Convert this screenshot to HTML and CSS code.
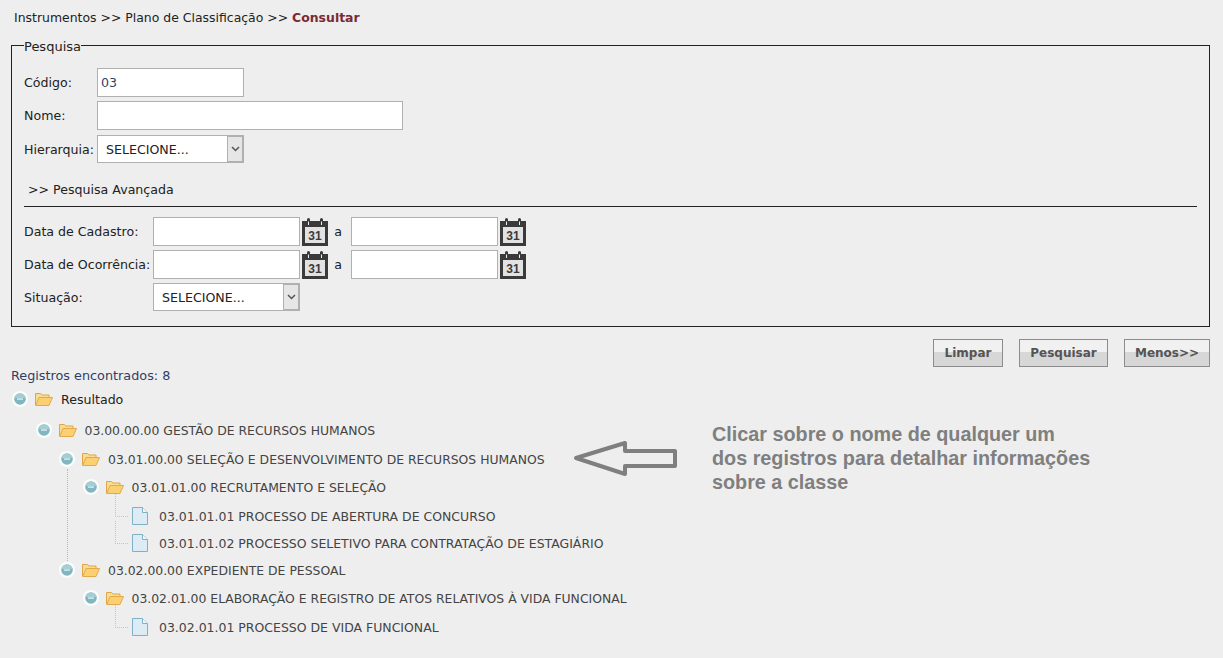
FILE: index.html
```html
<!DOCTYPE html>
<html lang="pt-BR">
<head>
    <meta charset="UTF-8">
    <title>Plano de Classificação - Consultar</title>
    <link rel="stylesheet" href="styles.css">
</head>
<body>
    <!-- icon definitions -->
    <svg class="icon-defs" width="0" height="0">
        <defs>
            <symbol id="cal" viewBox="0 0 26 28">
                <path fill="#3a3a3a" d="M0 3h5V1.5a1.5 1.5 0 0 1 3 0V3h10V1.500a1.500 1.500 0 0 1 3 0V3h5v25H0z"/>
                <rect x="3" y="9" width="20" height="16" fill="#e2e2e2"/>
                <rect x="6" y="3.500" width="1" height="3.500" fill="#eee"/>
                <rect x="19" y="3.500" width="1" height="3.500" fill="#eee"/>
                <text x="13" y="22" text-anchor="middle" class="cal-num">31</text>
            </symbol>
            <symbol id="toggle" viewBox="0 0 16 16">
                <circle cx="8" cy="8" r="8" fill="#fbfdfd"/>
                <circle cx="8" cy="8" r="5.800" fill="#7fb6c1"/>
                <path d="M2.400 7a5.800 5.800 0 0 1 11.200 0z" fill="#a5cdd4"/>
                <rect x="5" y="7.300" width="6" height="1.500" fill="#dbe9ec"/>
            </symbol>
            <symbol id="folder" viewBox="0 0 18 14">
                <path d="M.5 13V1.500h5l1.500 1.500h7v3" fill="#f9dc94" stroke="#dfa54a"/>
                <path d="M.7 13.500 4 5.500h13.500l-3.500 8z" fill="#fbd070" stroke="#e3a94e"/>
            </symbol>
            <symbol id="leaf" viewBox="0 0 16 18">
                <path d="M.5.500h10l5 5v12H.5z" fill="#dcebf4" stroke="#7fb0c6"/>
                <path d="M10.500.500v5h5" fill="#f4f9fc" stroke="#7fb0c6"/>
            </symbol>
            <symbol id="chev" viewBox="0 0 9 6">
                <path d="M1 1l3.500 3.500L8 1" fill="none" stroke="#555" stroke-width="1.500"/>
            </symbol>
        </defs>
    </svg>

    <div class="breadcrumb">
        Instrumentos &gt;&gt; Plano de Classificação &gt;&gt; <strong>Consultar</strong>
    </div>

    <fieldset class="search-box">
        <legend>Pesquisa</legend>

        <div class="form-row first">
            <label class="lbl">Código:</label>
            <input class="txt" type="text" value="03">
        </div>
        <div class="form-row">
            <label class="lbl">Nome:</label>
            <input class="txt txt-wide" type="text">
        </div>
        <div class="form-row hier-row">
            <label class="lbl">Hierarquia:</label>
            <div class="select-box">
                <select><option>SELECIONE...</option></select>
                <span class="select-arrow"><svg width="9" height="6"><use href="#chev"/></svg></span>
            </div>
        </div>

        <div class="advanced">&gt;&gt; Pesquisa Avançada</div>

        <div class="form-row date-row">
            <label class="lbl lbl-long">Data de Cadastro:</label>
            <input class="txt" type="text">
            <svg class="cal" width="26" height="28"><use href="#cal"/></svg>
            <span class="sep">a</span>
            <input class="txt" type="text">
            <svg class="cal" width="26" height="28"><use href="#cal"/></svg>
        </div>
        <div class="form-row date-row">
            <label class="lbl lbl-long">Data de Ocorrência:</label>
            <input class="txt" type="text">
            <svg class="cal" width="26" height="28"><use href="#cal"/></svg>
            <span class="sep">a</span>
            <input class="txt" type="text">
            <svg class="cal" width="26" height="28"><use href="#cal"/></svg>
        </div>
        <div class="form-row date-row">
            <label class="lbl lbl-long">Situação:</label>
            <div class="select-box">
                <select><option>SELECIONE...</option></select>
                <span class="select-arrow"><svg width="9" height="6"><use href="#chev"/></svg></span>
            </div>
        </div>
    </fieldset>

    <div class="actions">
        <button class="btn btn-limpar">Limpar</button>
        <button class="btn btn-pesquisar">Pesquisar</button>
        <button class="btn btn-menos">Menos&gt;&gt;</button>
    </div>

    <div class="results">
        <div class="count">Registros encontrados: 8</div>

        <ul class="tree">
            <li>
                <div class="node root"><svg class="tog"><use href="#toggle"/></svg><svg class="fld"><use href="#folder"/></svg><a>Resultado</a></div>
                <ul>
                    <li>
                        <div class="node gap-3"><svg class="tog"><use href="#toggle"/></svg><svg class="fld"><use href="#folder"/></svg><a>03.00.00.00 GESTÃO DE RECURSOS HUMANOS</a></div>
                        <ul class="has-line">
                            <li>
                                <div class="node gap-1"><svg class="tog"><use href="#toggle"/></svg><svg class="fld"><use href="#folder"/></svg><a>03.01.00.00 SELEÇÃO E DESENVOLVIMENTO DE RECURSOS HUMANOS</a></div>
                                <ul>
                                    <li>
                                        <div class="node"><svg class="tog"><use href="#toggle"/></svg><svg class="fld"><use href="#folder"/></svg><a>03.01.01.00 RECRUTAMENTO E SELEÇÃO</a></div>
                                        <ul class="leaves">
                                            <li class="node leaf gap-1"><svg class="doc"><use href="#leaf"/></svg><a>03.01.01.01 PROCESSO DE ABERTURA DE CONCURSO</a></li>
                                            <li class="node leaf gap-n1"><svg class="doc"><use href="#leaf"/></svg><a>03.01.01.02 PROCESSO SELETIVO PARA CONTRATAÇÃO DE ESTAGIÁRIO</a></li>
                                        </ul>
                                    </li>
                                </ul>
                            </li>
                            <li>
                                <div class="node gap-n1"><svg class="tog"><use href="#toggle"/></svg><svg class="fld"><use href="#folder"/></svg><a>03.02.00.00 EXPEDIENTE DE PESSOAL</a></div>
                                <ul>
                                    <li>
                                        <div class="node"><svg class="tog"><use href="#toggle"/></svg><svg class="fld"><use href="#folder"/></svg><a>03.02.01.00 ELABORAÇÃO E REGISTRO DE ATOS RELATIVOS À VIDA FUNCIONAL</a></div>
                                        <ul class="leaves">
                                            <li class="node leaf gap-1"><svg class="doc"><use href="#leaf"/></svg><a>03.02.01.01 PROCESSO DE VIDA FUNCIONAL</a></li>
                                        </ul>
                                    </li>
                                </ul>
                            </li>
                        </ul>
                    </li>
                </ul>
            </li>
        </ul>

        <!-- annotation on top of the screenshot -->
        <svg class="note-arrow" width="106" height="40" viewBox="0 0 106 40">
            <path d="M4 19 L53 4 V12 H103 V27 H53 V35 Z" fill="none" stroke="#7f7f7f" stroke-width="4" stroke-linejoin="round"/>
        </svg>
        <div class="note">Clicar sobre o nome de qualquer um<br>dos registros para detalhar informações<br>sobre a classe</div>
    </div>
</body>
</html>
```

FILE: styles.css
```css
body {
    margin: 0;
    padding: 0 13px 0 11px;
    background-color: #eeeeee;
    font-family: "DejaVu Sans", Verdana, sans-serif;
    font-size: 12.600px;
    color: #222222;
}

.icon-defs {
    position: absolute;
}

.cal-num {
    font-family: "Liberation Sans", Arial, sans-serif;
    font-size: 12px;
    font-weight: bold;
    fill: #3a3a3a;
}

.breadcrumb {
    height: 37px;
    padding-left: 3px;
    line-height: 35px;
    font-size: 12.450px;
    white-space: nowrap;
}

.breadcrumb strong {
    color: #7a2a33;
}

.search-box {
    height: 290px;
    margin: 0;
    padding: 0 12px;
    border: 1px solid #222222;
    box-sizing: border-box;
    min-width: 0;
}

.search-box legend {
    margin-left: 0;
    padding: 2px 0 0;
    line-height: 15px;
    font-size: 13px;
}

.form-row {
    display: flex;
    align-items: center;
    margin-bottom: 4px;
}

.form-row.first {
    margin-top: 14px;
}

.hier-row {
    margin-top: 5px;
}

.lbl {
    width: 73px;
    flex: none;
    white-space: nowrap;
}

.lbl-long {
    width: 129px;
}

.txt {
    width: 147px;
    height: 29px;
    padding: 0 3px;
    border: 1px solid #b0b0b0;
    box-sizing: border-box;
    background: #ffffff;
    font-family: inherit;
    font-size: 12.600px;
    color: #2f3f66;
}

.txt-wide {
    width: 306px;
}

.select-box {
    position: relative;
    width: 147px;
    height: 28px;
}

.select-box select {
    width: 100%;
    height: 100%;
    padding: 0 0 0 8px;
    border: 1px solid #b0b0b0;
    border-radius: 0;
    box-sizing: border-box;
    background: #ffffff;
    font-family: inherit;
    font-size: 12.600px;
    color: #222222;
    appearance: none;
}

.select-arrow {
    position: absolute;
    top: 0;
    right: 0;
    bottom: 0;
    width: 17px;
    display: flex;
    align-items: center;
    justify-content: center;
    border: 2px solid #b0b0b0;
    border-left-width: 1px;
    box-sizing: border-box;
    background: #e6e6e6;
}

.advanced {
    margin: 20px 0 10px;
    padding: 0 0 9px 4px;
    height: 14px;
    line-height: 14px;
    border-bottom: 1px solid #222222;
}

.date-row .cal {
    flex: none;
    margin-left: 2px;
}

.sep {
    width: 23px;
    padding-right: 3px;
    box-sizing: border-box;
    text-align: center;
}

.actions {
    display: flex;
    justify-content: flex-end;
    gap: 16px;
    margin-top: 12px;
}

.btn {
    height: 28px;
    padding: 0;
    border: 1px solid #8c8c8c;
    background: linear-gradient(#f1f1f1 0, #f1f1f1 45%, #d7d7d7 45%, #d7d7d7 100%);
    font-family: inherit;
    font-size: 12px;
    font-weight: bold;
    color: #555555;
}

.btn-limpar {
    width: 70px;
}

.btn-pesquisar {
    width: 89px;
}

.btn-menos {
    width: 86px;
}

.results {
    position: relative;
}

.count {
    margin-top: 1px;
    height: 15px;
    line-height: 15px;
    font-size: 12.800px;
    color: #2f3f66;
}

.tree,
.tree ul {
    margin: 0;
    padding: 0;
    list-style: none;
}

.tree {
    font-size: 12.400px;
}

.tree ul {
    padding-left: 23.500px;
}

.tree ul.has-line {
    position: relative;
}

/* dotted line between the two second level folders */
.tree ul.has-line::before {
    content: "";
    position: absolute;
    left: 32px;
    top: 24px;
    height: 100px;
    border-left: 1px dotted #b8b8b8;
}

.node {
    position: relative;
    display: flex;
    align-items: center;
    height: 28px;
    white-space: nowrap;
    color: #444444;
}

.root {
    margin-top: 2px;
    font-size: 12.600px;
    color: #222222;
}

.gap-3 {
    margin-top: 3px;
}

.gap-1 {
    margin-top: 1px;
}

.gap-n1 {
    margin-top: -1px;
}

.tog {
    width: 16px;
    height: 16px;
    flex: none;
    margin-left: 1px;
}

.fld {
    width: 18px;
    height: 14px;
    flex: none;
    margin-left: 7px;
}

.node a {
    margin-left: 8px;
}

.leaf {
    padding-left: 27px;
    font-size: 12.480px;
}

.leaf::before {
    content: "";
    position: absolute;
    left: 10px;
    top: -8px;
    width: 12px;
    height: 22px;
    border-left: 1px dotted #c4c4c4;
    border-bottom: 1px dotted #c4c4c4;
}

.doc {
    width: 16px;
    height: 18px;
    flex: none;
}

.leaf a {
    margin-left: 11px;
}

.note-arrow {
    position: absolute;
    left: 561px;
    top: 71px;
}

.note {
    position: absolute;
    left: 701px;
    top: 54px;
    font-family: "Liberation Sans", Arial, sans-serif;
    font-size: 19.800px;
    font-weight: bold;
    line-height: 24px;
    color: #7f7f7f;
    white-space: nowrap;
}
```
